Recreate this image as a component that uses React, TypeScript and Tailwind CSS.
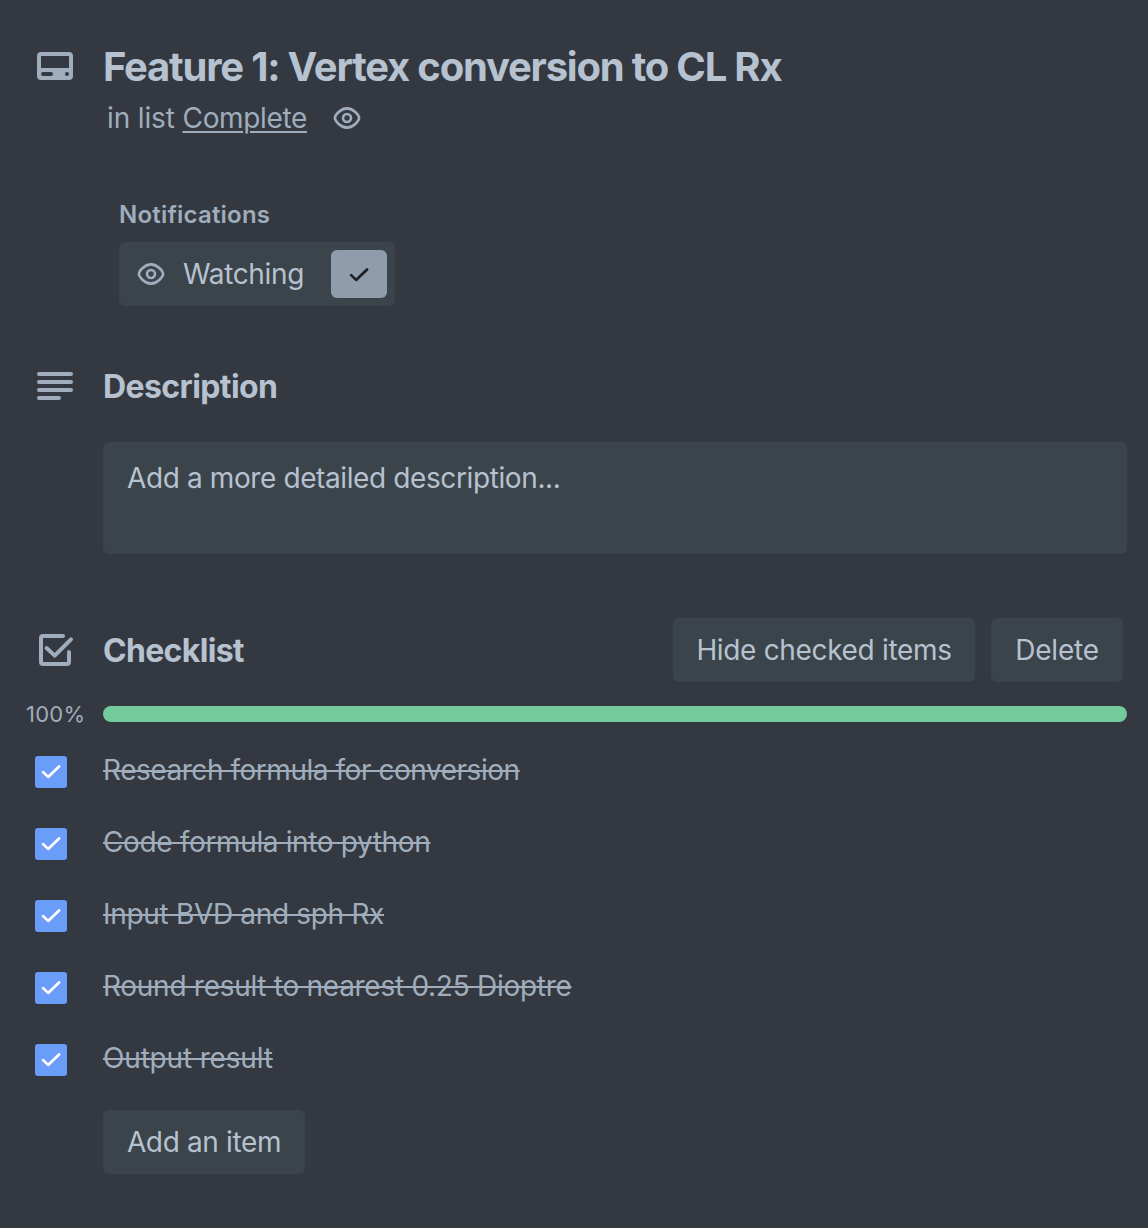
import type { ReactNode } from "react";

const items = [
  { text: "Research formula for conversion", track: "tracking-[-0.46px]" },
  { text: "Code formula into python", track: "tracking-[-0.36px]" },
  { text: "Input BVD and sph Rx", track: "tracking-[-0.32px]" },
  { text: "Round result to nearest 0.25 Dioptre", track: "tracking-[-0.28px]" },
  { text: "Output result", track: "tracking-[-0.17px]" },
];

function Icon({ children }: { children: ReactNode }) {
  return (
    <svg className="size-12 shrink-0 text-[#9fadbc]" viewBox="0 0 24 24" fill="currentColor">
      {children}
    </svg>
  );
}

function Eye() {
  return (
    <svg className="size-8 shrink-0 text-[#9fadbc]" viewBox="-16 -16 32 32" fill="none" stroke="currentColor" strokeWidth="2.6">
      <path d="M-12.1 0C-12.1 -2.4 -6.8 -9.6 0 -9.6S12.1 -2.4 12.1 0S6.8 9.6 0 9.6S-12.1 2.4 -12.1 0Z" />
      <circle r="4" />
    </svg>
  );
}

function Check({ className }: { className: string }) {
  return (
    <svg className={className} viewBox="-16 -16 32 32" fill="none" stroke="currentColor" strokeWidth="2.7" strokeLinecap="round" strokeLinejoin="round">
      <path d="M-7.9 0.1L-2.9 4.9L8.1 -5.6" />
    </svg>
  );
}

export default function App() {
  return (
    <main className="h-[1228px] w-[1148px] overflow-hidden bg-[#343840] pl-[31px] pr-[21px] pt-[42px] font-['Inter',sans-serif] text-[28px] leading-8 text-[#b6c2cf]">
      <header className="flex h-12 items-center">
        <Icon>
          <path fillRule="evenodd" d="M5 5H19Q21 5 21 7V17Q21 19 19 19H5Q3 19 3 17V7Q3 5 5 5ZM5 7V13H19V7ZM6 15A1 1 0 0 0 6 17H10A1 1 0 0 0 10 15ZM18 15A1 1 0 0 0 18 17A1 1 0 0 0 18 15Z" />
        </Icon>
        <h1 className="ml-6 whitespace-nowrap pt-0.5 text-[40px] font-bold leading-12 tracking-[-1.22px]">Feature 1: Vertex conversion to CL Rx</h1>
      </header>
      <div className="ml-[76px] mt-3 flex h-8 items-center whitespace-nowrap text-[#9fadbc]">
        <span className="w-[200px] tracking-[-0.25px]"><span className="tracking-[-0.13px]">in list </span><a className="underline decoration-2 underline-offset-3 tracking-[-0.35px]">Complete</a></span>
        <span className="ml-6 flex"><Eye /></span>
      </div>

      <section className="ml-[88px] mt-16">
        <h2 className="h-8 pt-px text-2xl font-semibold leading-8 tracking-[0.2px] text-[#9fadbc]">Notifications</h2>
        <div className="mt-3 flex h-16 w-[276px] items-center rounded-md bg-[#3c444b] px-2">
          <span className="ml-2 flex"><Eye /></span>
          <span className="ml-4 tracking-[-0.36px]">Watching</span>
          <span className="ml-auto grid h-12 w-14 place-items-center rounded-md bg-[#8f9cab] pt-0.5">
            <Check className="size-8 text-[#1d2125]" />
          </span>
        </div>
      </section>

      <section className="mt-14">
        <div className="flex h-12 items-center">
          <Icon>
            <rect x="3" y="5" width="18" height="2" rx="1" />
            <rect x="3" y="9" width="18" height="2" rx="1" />
            <rect x="3" y="13" width="18" height="2" rx="1" />
            <rect x="3" y="17" width="12" height="2" rx="1" />
          </Icon>
          <h2 className="ml-6 pt-0.5 text-[32px] font-bold leading-10 tracking-[-0.6px]">Description</h2>
        </div>
        <div className="ml-[72px] mt-8 h-28 rounded-md bg-[#3c444b] px-6 pt-5">
          <span className="tracking-[-0.39px]">Add a more detailed description...</span>
        </div>
      </section>

      <section className="mt-16">
        <div className="flex h-16 items-center pr-1">
          <Icon>
            <path d="M16 5H6Q5 5 5 6V18Q5 19 6 19H18Q19 19 19 18V13M7.8 11L11.85 14.8L20 6.7" fill="none" stroke="currentColor" strokeWidth="2" strokeLinecap="round" strokeLinejoin="round" />
          </Icon>
          <h2 className="ml-6 pt-0.5 text-[32px] font-bold leading-10 tracking-[-0.68px]">Checklist</h2>
          <button className="ml-auto h-16 w-[302px] whitespace-nowrap rounded-md bg-[#3c444b] tracking-[-0.33px]">Hide checked items</button>
          <button className="ml-4 h-16 w-[132px] rounded-md bg-[#3c444b] tracking-[-0.2px]">Delete</button>
        </div>
        <div className="-ml-[5px] mt-4 flex h-8 items-center">
          <span className="w-[77px] text-[22px] tracking-[0.25px] text-[#9fadbc]">100%</span>
          <div className="h-4 flex-1 rounded-full bg-[#73cb9b]" />
        </div>
        <ul className="mt-6 flex flex-col gap-10">
          {items.map((item) => (
            <li key={item.text} className="flex h-8 items-start pl-1">
              <span className="mt-[2px] grid size-8 place-items-center rounded-[3px] bg-[#6a9cf9]">
                <Check className="size-8 text-white" />
              </span>
              <span className={`ml-9 whitespace-nowrap text-[#9fadbc] line-through decoration-2 ${item.track}`}>{item.text}</span>
            </li>
          ))}
        </ul>
        <button className="ml-[72px] mt-9 h-16 w-[202px] rounded-md bg-[#3c444b] tracking-[-0.36px]">Add an item</button>
      </section>
    </main>
  );
}
